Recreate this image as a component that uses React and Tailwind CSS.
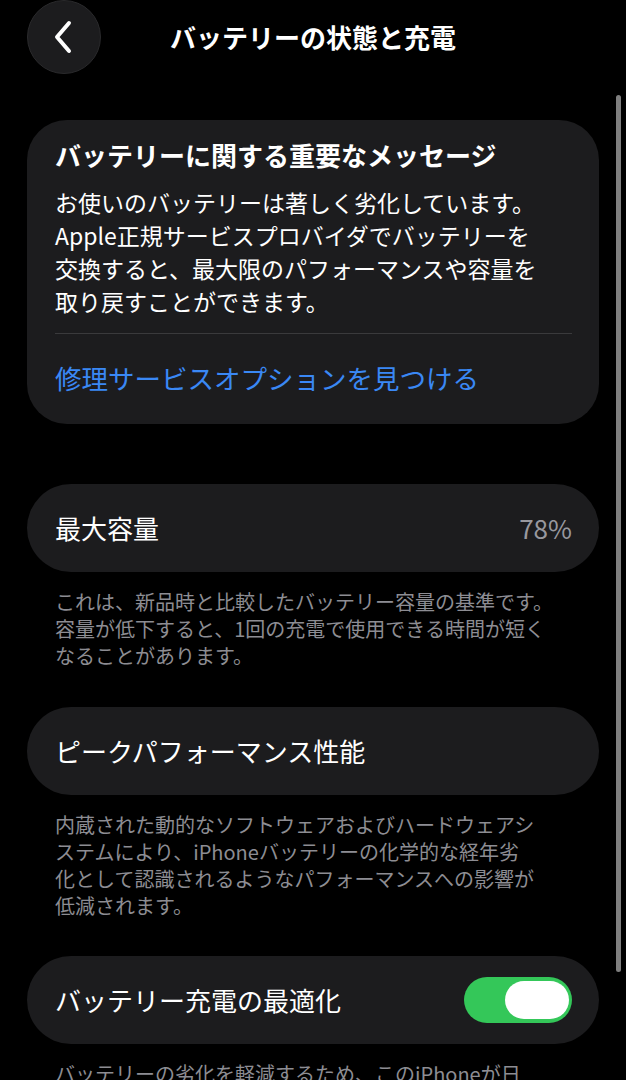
import React from "react";

const font = { fontFamily: '"Noto Sans CJK JP", "Noto Sans", sans-serif' };

const Row = ({ label, children }) => (
  <div className="mx-[27px] h-[88px] rounded-full bg-[#1c1c1e] flex items-center justify-between pl-[28px] pr-[27px]">
    <span className="text-[26px] text-white leading-none">{label}</span>
    {children}
  </div>
);

const Footer = ({ lines }) => (
  <p className="mt-[16px] pl-[55px] pr-[20px] text-[20px] leading-[27px] text-[#8d8d93] whitespace-nowrap">
    {lines.map((l, i) => (
      <React.Fragment key={i}>
        {l}
        {i < lines.length - 1 && <br />}
      </React.Fragment>
    ))}
  </p>
);

const App = () => {
  return (
    <div className="relative w-[626px] h-[1080px] overflow-hidden bg-black text-white" style={font}>
      {/* header */}
      <div className="grid grid-cols-[1fr_auto_1fr] items-center h-[74px]">
        <div className="pl-[27px]">
          <button className="w-[74px] h-[74px] rounded-full bg-[#1c1c1e] border border-[#2a2a2c] flex items-center justify-center">
            <svg width="28" height="36" viewBox="0 0 28 36" fill="none">
              <path d="M19 4 L7 18 L19 32" stroke="white" strokeWidth="4" strokeLinecap="round" strokeLinejoin="round" />
            </svg>
          </button>
        </div>
        <h1 className="text-[26px] font-bold leading-none">バッテリーの状態と充電</h1>
        <div />
      </div>

      {/* message card */}
      <div className="mx-[27px] mt-[46px] rounded-[40px] bg-[#1c1c1e] pt-[17px] pb-[28px] pl-[28px] pr-[27px]">
        <h2 className="text-[26px] font-bold leading-[36px]">バッテリーに関する重要なメッセージ</h2>
        <p className="mt-[13px] text-[23px] leading-[33px] text-white whitespace-nowrap">
          お使いのバッテリーは著しく劣化しています。
          <br />
          Apple正規サービスプロバイダでバッテリーを
          <br />
          交換すると、最大限のパフォーマンスや容量を
          <br />
          取り戻すことができます。
        </p>
        <div className="mt-[15px] h-px bg-[#3a3a3c]" />
        <p className="mt-[26px] text-[26.5px] leading-[36px] text-[#3a88f5]">修理サービスオプションを見つける</p>
      </div>

      <div className="mt-[60px]">
        <Row label="最大容量">
          <span className="text-[26px] text-[#98989e] leading-none">78%</span>
        </Row>
        <Footer
          lines={[
            "これは、新品時と比較したバッテリー容量の基準です。",
            "容量が低下すると、1回の充電で使用できる時間が短く",
            "なることがあります。",
          ]}
        />
      </div>

      <div className="mt-[38px]">
        <Row label="ピークパフォーマンス性能" />
        <Footer
          lines={[
            "内蔵された動的なソフトウェアおよびハードウェアシ",
            "ステムにより、iPhoneバッテリーの化学的な経年劣",
            "化として認識されるようなパフォーマンスへの影響が",
            "低減されます。",
          ]}
        />
      </div>

      <div className="mt-[37px]">
        <Row label="バッテリー充電の最適化">
          <div className="w-[108px] h-[46px] rounded-full bg-[#34c759] flex items-center justify-end pr-[3px]">
            <div className="w-[64px] h-[38px] rounded-full bg-white" />
          </div>
        </Row>
        <Footer lines={["バッテリーの劣化を軽減するため、このiPhoneが日"]} />
      </div>

      {/* scroll indicator */}
      <div className="absolute left-[616px] top-[95px] w-[5px] h-[877px] rounded-full bg-[#7f7f7f]" />
    </div>
  );
};

export default App;
